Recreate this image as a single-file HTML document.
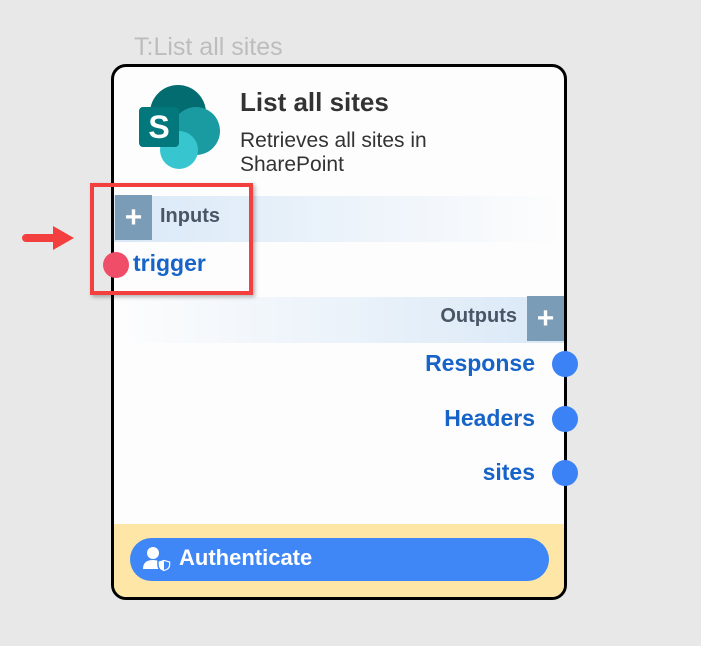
<!DOCTYPE html>
<html><head><style>
body{margin:0;width:701px;height:646px;background:#e8e8e8;position:relative;overflow:hidden;font-family:"Liberation Sans",sans-serif}
.a{position:absolute;white-space:nowrap}
.p{font-weight:bold}
</style></head><body>
<div class="a" style="left:134px;top:33px;font-size:25px;color:#bdbdbd">T:List all sites</div>
<div class="a" style="left:111px;top:64px;width:450px;height:530px;border:3px solid #000;border-radius:15px;background:#fdfdfd;overflow:hidden">
  <div class="a" style="left:0;top:457px;width:100%;height:80px;background:#fde6a6"></div>
  <div class="a" style="left:0;top:129px;width:100%;height:46px;background:linear-gradient(90deg,#d9e8f7,#fdfdfd)"></div>
  <div class="a" style="left:0;top:230px;width:100%;height:46px;background:linear-gradient(90deg,#fdfdfd,#d9e8f7)"></div>
</div>
<svg class="a" style="left:136px;top:84px" width="88" height="86" viewBox="0 0 88 86">
  <circle cx="42" cy="29" r="28" fill="#036c70"/>
  <circle cx="60" cy="47" r="24" fill="#1a9ba1"/>
  <circle cx="43" cy="66" r="19" fill="#37c6d0"/>
  <rect x="3" y="23" width="40" height="40" rx="4" fill="#03787c"/>
  <text x="23" y="54" text-anchor="middle" fill="#fff" font-size="32" font-weight="bold" font-family="Liberation Sans">S</text>
</svg>
<div class="a" style="left:240px;top:87px;font-size:26px;font-weight:bold;color:#333">List all sites</div>
<div class="a" style="left:240px;top:129px;font-size:21px;line-height:24px;color:#333">Retrieves all sites in<br>SharePoint</div>
<div class="a p" style="left:115px;top:195px;width:37px;height:45px;background:#7b9cb7;color:#fff;font-size:30px;text-align:center;line-height:45px">+</div>
<div class="a" style="left:160px;top:205px;font-size:20px;font-weight:bold;color:#4a5566">Inputs</div>
<div class="a" style="left:103px;top:252px;width:26px;height:26px;border-radius:50%;background:#f04d68"></div>
<div class="a" style="left:133px;top:250px;font-size:23px;font-weight:bold;color:#1764c8">trigger</div>
<div class="a p" style="left:527px;top:296px;width:37px;height:45px;background:#7b9cb7;color:#fff;font-size:30px;text-align:center;line-height:45px">+</div>
<div class="a" style="left:390px;top:305px;width:127px;text-align:right;font-size:20px;font-weight:bold;color:#4a5566">Outputs</div>
<div class="a" style="left:335px;top:350px;width:200px;text-align:right;font-size:23px;font-weight:bold;color:#1764c8">Response</div>
<div class="a" style="left:335px;top:405px;width:200px;text-align:right;font-size:23px;font-weight:bold;color:#1764c8">Headers</div>
<div class="a" style="left:335px;top:459px;width:200px;text-align:right;font-size:23px;font-weight:bold;color:#1764c8">sites</div>
<div class="a" style="left:552px;top:351px;width:26px;height:26px;border-radius:50%;background:#3b82f6"></div>
<div class="a" style="left:552px;top:406px;width:26px;height:26px;border-radius:50%;background:#3b82f6"></div>
<div class="a" style="left:552px;top:460px;width:26px;height:26px;border-radius:50%;background:#3b82f6"></div>
<div class="a" style="left:90px;top:183px;width:155px;height:104px;border:4px solid #f43f3f;box-shadow:2px 2px 4px rgba(0,0,0,.3)"></div>
<svg class="a" style="left:20px;top:222px" width="56" height="32"><path d="M6 12 H33 V4 L54 16 L33 28 V20 H6 A4 4 0 0 1 6 12Z" fill="#f43f3f"/></svg>
<div class="a" style="left:130px;top:538px;width:419px;height:43px;border-radius:22px;background:#3f86f7"></div>
<svg class="a" style="left:143px;top:546px" width="30" height="26" viewBox="0 0 30 26">
  <circle cx="10" cy="7" r="6" fill="#fff"/>
  <path d="M0 23 Q0 14 10 14 Q16 14 18 17 V23Z" fill="#fff"/>
  <path d="M21 13 L28 15 V19 Q28 24 21 26 Q15 24 15 19 V15Z" fill="#fff" stroke="#3f86f7" stroke-width="1.5"/>
  <path d="M21 15 L26 16.5 V19 Q26 22.5 21 24Z" fill="#3f86f7"/>
</svg>
<div class="a" style="left:179px;top:545px;font-size:22px;font-weight:bold;color:#fff">Authenticate</div>
</body></html>
